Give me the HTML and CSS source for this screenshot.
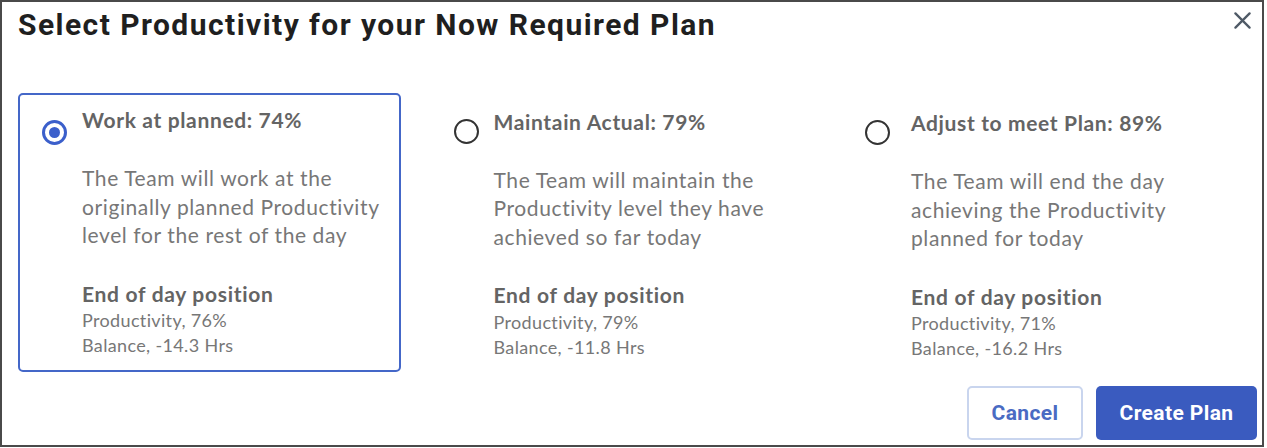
FILE: index.html
```html
<!DOCTYPE html>
<html lang="en">
<head>
<meta charset="utf-8">
<title>Select Productivity</title>
<link rel="stylesheet" href="styles.css">
</head>
<body>
<div class="dialog">
  <header class="head">
    <h1 class="title">Select Productivity for your Now Required Plan</h1>
    <button class="close" aria-label="Close">
      <svg width="18" height="18" viewBox="0 0 18 18"><path d="M1.5 1.5 L16.5 16.5 M16.5 1.5 L1.5 16.5" stroke="#4f5a66" stroke-width="2.4" stroke-linecap="round" fill="none"/></svg>
    </button>
  </header>
  <div class="options">
    <label class="option selected">
      <span class="radio"><span class="dot"></span></span>
      <div class="content">
        <div class="opt-title">Work at planned: 74%</div>
        <p class="desc">The Team will work at the originally planned Productivity level for the rest of the day</p>
        <div class="eod-title">End of day position</div>
        <div class="eod-line">Productivity, 76%</div>
        <div class="eod-line">Balance, -14.3 Hrs</div>
      </div>
    </label>
    <label class="option option-mid">
      <span class="radio"></span>
      <div class="content">
        <div class="opt-title">Maintain Actual: 79%</div>
        <p class="desc">The Team will maintain the Productivity level they have achieved so far today</p>
        <div class="eod-title">End of day position</div>
        <div class="eod-line">Productivity, 79%</div>
        <div class="eod-line">Balance, -11.8 Hrs</div>
      </div>
    </label>
    <label class="option option-last">
      <span class="radio"></span>
      <div class="content">
        <div class="opt-title">Adjust to meet Plan: 89%</div>
        <p class="desc">The Team will end the day achieving the Productivity planned for today</p>
        <div class="eod-title">End of day position</div>
        <div class="eod-line">Productivity, 71%</div>
        <div class="eod-line">Balance, -16.2 Hrs</div>
      </div>
    </label>
  </div>
  <footer class="actions">
    <button class="btn btn-cancel">Cancel</button>
    <button class="btn btn-create">Create Plan</button>
  </footer>
</div>
</body>
</html>
```
FILE: styles.css
```css
* { box-sizing: border-box; }
html, body { margin: 0; padding: 0; background: #ffffff; }
body { width: 1267px; height: 448px; overflow: hidden; }

.dialog {
  width: 1264px;
  height: 447px;
  border: 2px solid #4a4a4a;
  background: #ffffff;
  display: flex;
  flex-direction: column;
}

.head {
  height: 91px;
  display: flex;
  justify-content: space-between;
  align-items: flex-start;
  padding: 5px 8px 0 16px;
}
.title {
  margin: 0;
  font-family: Roboto, "Liberation Sans", sans-serif;
  font-weight: 700;
  font-size: 30px;
  line-height: 35px;
  color: #1f1f1f;
  letter-spacing: 1.45px;
  white-space: nowrap;
}
.close {
  width: 24px;
  height: 24px;
  margin-top: 1px;
  padding: 0;
  border: 0;
  background: transparent;
  display: flex;
  align-items: center;
  justify-content: center;
}
.close svg { width: 17px; height: 17px; }

.options {
  display: grid;
  grid-template-columns: 383px 383px 383px;
  column-gap: 28.5px;
  padding-left: 16px;
}
.option {
  height: 279px;
  border: 2px solid transparent;
  border-radius: 5px;
  padding: 13px 6px 0 22px;
  display: flex;
  align-items: flex-start;
  gap: 15px;
  font-family: Lato, "Open Sans", sans-serif;
}
.option.selected { border-color: #4467c8; }
.option-mid { padding-top: 14.5px; }
.option-last { padding-top: 16px; gap: 21px; }

.radio {
  flex: none;
  width: 25px;
  height: 25px;
  margin-top: 12px;
  border-radius: 50%;
  border: 2px solid #333333;
  display: flex;
  align-items: center;
  justify-content: center;
}
.option-mid .radio, .option-last .radio { margin-top: 9px; }
.option.selected .radio { border: 3px solid #3b5fcb; }
.dot {
  width: 11px;
  height: 11px;
  border-radius: 50%;
  background: #3b5fcb;
}

.content { color: #777777; }
.opt-title {
  font-weight: 700;
  font-size: 21px;
  line-height: 24px;
  letter-spacing: 0.65px;
  color: #646464;
  white-space: nowrap;
}
.desc {
  margin: 32px 0 0;
  font-size: 21px;
  line-height: 28.5px;
  letter-spacing: 0.6px;
  color: #777777;
}
.eod-title {
  margin-top: 32px;
  font-weight: 700;
  font-size: 21px;
  line-height: 24px;
  letter-spacing: 0.7px;
  color: #646464;
}
.eod-line {
  font-size: 18px;
  line-height: 25px;
  letter-spacing: 0.35px;
  color: #777777;
}
.eod-title + .eod-line { margin-top: 2.5px; }

.actions {
  display: flex;
  justify-content: flex-end;
  gap: 13px;
  padding: 14px 5px 0 0;
}
.btn {
  height: 54px;
  border-radius: 5px;
  font-family: Roboto, "Liberation Sans", sans-serif;
  font-weight: 700;
  font-size: 21px;
  letter-spacing: 0.4px;
  padding: 0;
}
.btn-cancel {
  width: 116px;
  background: #ffffff;
  border: 2px solid #c9d5ee;
  color: #4a6bc3;
}
.btn-create {
  width: 161px;
  background: #3a5bbf;
  border: 0;
  color: #ffffff;
}
```
